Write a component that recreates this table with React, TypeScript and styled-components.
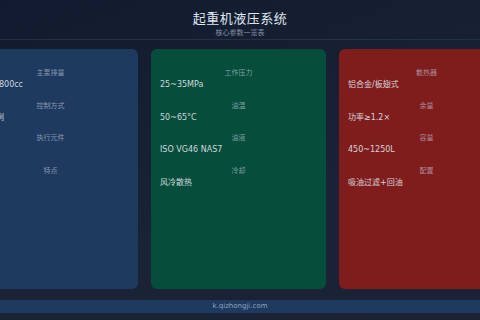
import React from "react";
import styled, { createGlobalStyle } from "styled-components";

const GlobalStyle = createGlobalStyle`
  html, body {
    margin: 0;
    padding: 0;
    background: #151d30;
  }
  #root {
    width: 480px;
    height: 320px;
  }
`;

const FONT = `"DejaVu Sans", "Noto Sans CJK SC", sans-serif`;

const Page = styled.div`
  width: 480px;
  height: 320px;
  overflow: hidden;
  display: flex;
  flex-direction: column;
  background: linear-gradient(160deg, #111a2e 0%, #1a2236 60%, #1b2235 100%);
  font-family: ${FONT};
`;

const Header = styled.header`
  height: 40px;
  box-sizing: border-box;
  padding-top: 11px;
  border-bottom: 1px solid #263146;
  display: flex;
  flex-direction: column;
  align-items: center;
  flex-shrink: 0;
`;

const Title = styled.h1`
  margin: 0;
  font-size: 13px;
  line-height: 16px;
  font-weight: 400;
  color: #dfe5ee;
  letter-spacing: 0.5px;
`;

const Subtitle = styled.div`
  font-size: 7px;
  line-height: 10px;
  color: #8390a6;
  margin-top: 1px;
`;

const CardRow = styled.main`
  display: flex;
  justify-content: center;
  gap: 13px;
  margin-top: 9px;
  padding-right: 3px;
  height: 240px;
  flex-shrink: 0;
`;

const Card = styled.section<{ $bg: string }>`
  width: 175px;
  flex-shrink: 0;
  box-sizing: border-box;
  border-radius: 6px;
  background: ${(p) => p.$bg};
  padding: 19px 9px;
  display: flex;
  flex-direction: column;
  gap: 10.5px;
`;

const Spec = styled.div`
  display: flex;
  flex-direction: column;
`;

const Label = styled.div`
  text-align: center;
  font-size: 7px;
  line-height: 10px;
  color: rgba(203, 213, 225, 0.62);
`;

const Value = styled.div`
  margin-top: 1px;
  font-size: 8px;
  line-height: 11px;
  color: rgba(226, 232, 240, 0.9);
  white-space: nowrap;
`;

const Footer = styled.footer`
  margin-top: 11px;
  height: 13px;
  flex-shrink: 0;
  background: #1e3a5f;
  color: #8ea3bf;
  font-size: 7px;
  line-height: 13px;
  text-align: center;
`;

type SpecItem = { label: string; value: string };

const cards: { bg: string; specs: SpecItem[] }[] = [
  {
    bg: "#1e3a5f",
    specs: [
      { label: "主泵排量", value: "100cc-800cc" },
      { label: "控制方式", value: "电液比例" },
      { label: "执行元件", value: "油缸" },
      { label: "特点", value: "稳" },
    ],
  },
  {
    bg: "#064e3b",
    specs: [
      { label: "工作压力", value: "25~35MPa" },
      { label: "油温", value: "50~65°C" },
      { label: "油液", value: "ISO VG46 NAS7" },
      { label: "冷却", value: "风冷散热" },
    ],
  },
  {
    bg: "#7f1d1d",
    specs: [
      { label: "散热器", value: "铝合金/板翅式" },
      { label: "余量", value: "功率≥1.2×" },
      { label: "容量", value: "450~1250L" },
      { label: "配置", value: "吸油过滤+回油" },
    ],
  },
];

export default function App() {
  return (
    <>
      <GlobalStyle />
      <Page>
        <Header>
          <Title>起重机液压系统</Title>
          <Subtitle>核心参数一览表</Subtitle>
        </Header>
        <CardRow>
          {cards.map((c, i) => (
            <Card key={i} $bg={c.bg}>
              {c.specs.map((s, j) => (
                <Spec key={j}>
                  <Label>{s.label}</Label>
                  <Value>{s.value}</Value>
                </Spec>
              ))}
            </Card>
          ))}
        </CardRow>
        <Footer>k.qizhongji.com</Footer>
      </Page>
    </>
  );
}
